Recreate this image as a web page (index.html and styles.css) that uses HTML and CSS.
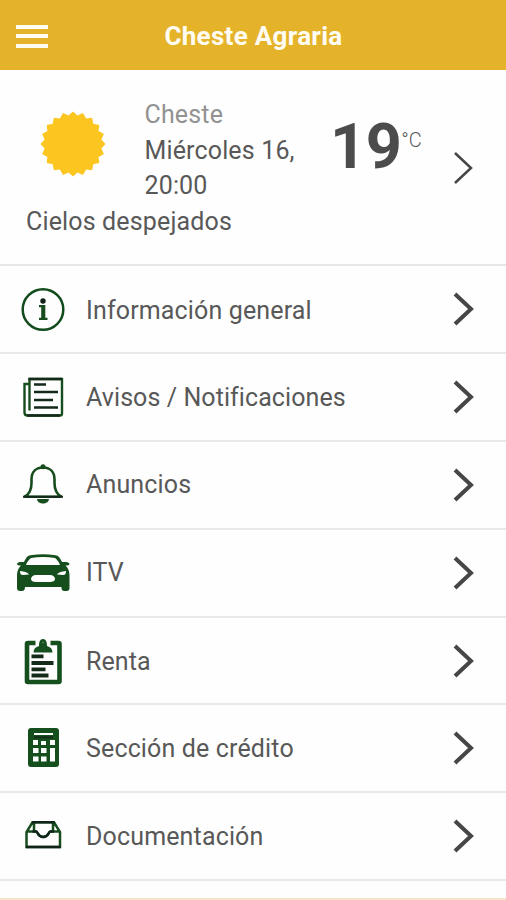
FILE: index.html
```html
<!DOCTYPE html>
<html lang="es">
<head>
<meta charset="utf-8">
<title>Cheste Agraria</title>
<link rel="stylesheet" href="styles.css">
</head>
<body>
<div class="app">
<header class="topbar">
  <div class="burger"><span></span><span></span><span></span></div>
  <h1>Cheste Agraria</h1>
</header>
<section class="weather">
  <div class="forecast">
    <div class="now">
      <svg class="sun" viewBox="-33 -33 66 66"><polygon fill="#fbc61f" points="0,-32.5 4.5,-28.4 10,-30.9 13.1,-25.6 19.1,-26.3 20.3,-20.3 26.3,-19.1 25.6,-13.1 30.9,-10 28.4,-4.5 32.5,0 28.4,4.5 30.9,10 25.6,13.1 26.3,19.1 20.3,20.3 19.1,26.3 13.1,25.6 10,30.9 4.5,28.4 0,32.5 -4.5,28.4 -10,30.9 -13.1,25.6 -19.1,26.3 -20.3,20.3 -26.3,19.1 -25.6,13.1 -30.9,10 -28.4,4.5 -32.5,0 -28.4,-4.5 -30.9,-10 -25.6,-13.1 -26.3,-19.1 -20.3,-20.3 -19.1,-26.3 -13.1,-25.6 -10,-30.9 -4.5,-28.4"/></svg>
      <div class="when"><p class="place">Cheste</p><p>Miércoles 16, 20:00</p></div>
    </div>
    <p class="sky">Cielos despejados</p>
  </div>
  <div class="temp"><strong>19</strong><span>°C</span></div>
  <svg class="arrow thin" viewBox="0 0 24 36"><path d="M3 3 19 18 3 33"/></svg>
</section>
<nav class="menu">
  <a class="row"><svg class="icon" viewBox="0 266 76 86"><circle cx="43" cy="309.500" r="20.300" fill="none" stroke="#124b1c" stroke-width="2.500"/><circle cx="43" cy="301" r="2.700" fill="#111f15"/><path fill="#174d1e" d="M39 305h6.300v12.800h2.200v2.200h-8.500v-2.200h2.200v-10.600h-2.200z"/></svg><span class="low">Información general</span><svg class="arrow" viewBox="0 0 24 36"><path d="M3 3 19 18 3 33"/></svg></a>
  <a class="row"><svg class="icon" viewBox="0 354 76 86"><g fill="none" stroke="#174d1e" stroke-width="2.400"><path d="M29.500 410.500V379H62v34.500q0 2-2 2H27.500q-3 0-3-3V384H29"/><path stroke="#13291a" d="M28.500 379H62M34 384.500h12M34 392h24M34 400h19M34 407.500h24M27 415.500h33"/></g></svg><span class="notices">Avisos / Notificaciones</span><svg class="arrow" viewBox="0 0 24 36"><path d="M3 3 19 18 3 33"/></svg></a>
  <a class="row"><svg class="icon" viewBox="0 442 76 86"><path d="M24.500 496.700C29 494.500 31.500 491 31.500 483v-3.500c0-8 5-12 11.500-12s11.500 4 11.500 12v3.500c0 8 2.500 11.500 7 13.700z" fill="none" stroke="#174d1e" stroke-width="2.600"/><circle cx="43" cy="466.800" r="2.500" fill="#174d1e"/><path d="M23 496.800h40" stroke="#13291a" stroke-width="2"/><path d="M37 499h12c-.5 6-11.500 6-12 0z" fill="#174d1e"/></svg><span>Anuncios</span><svg class="arrow" viewBox="0 0 24 36"><path d="M3 3 19 18 3 33"/></svg></a>
  <a class="row"><svg class="icon" viewBox="0 530 76 86"><path fill="#154f1e" fill-rule="evenodd" d="M24 562C27 556 28 555.500 32 555 39 553.900 47 553.900 54 555c4 .5 5 1 8 7 2 0 6-.5 7.500 1.500 0 2-2 2-4 2 3 3 4 6 4 10V588q0 3-3 3h-2q-3 0-3-3V587H25q0 4-3 4h-2q-3 0-3-3V575.500c0-4 1-7 4-10-2 0-4 0-4-2 1.500-2 5-1.500 7-1.500zM26 565h34c-1-3-3-5.500-5-7-8-1.500-16-1.500-24 0-2 1.500-4 4-5 7zM20 571c0 3 1 4 3 4l6-.5c-1-2-4-3-9-3.500zm46 0c-5 .5-8 1.500-9 3.500l6 .5c2 0 3-1 3-4zM31 579c0 2 2 3 5 3h14c3 0 5-1 5-3 0-2-2-4-5-4H36c-3 0-5 2-5 4z"/></svg><span>ITV</span><svg class="arrow" viewBox="0 0 24 36"><path d="M3 3 19 18 3 33"/></svg></a>
  <a class="row"><svg class="icon" viewBox="0 618 76 86"><path d="M35.500 643H28q-1 0-1 1V681q0 1 1 1H58.500q1 0 1-1V644q0-1-1-1H50.500" fill="none" stroke="#154f1e" stroke-width="4.600" stroke-linejoin="round"/><path fill="#154f1e" d="M33.500 652.500c0-3.500 2-5.500 5.500-6.500 0-4 1-7 4-7s4 3 4 7c3.500 1 5.500 3 5.500 6.500z"/><circle cx="43" cy="642.500" r=".8" fill="#6f9a74"/><path d="M31.500 656.300h12M31.500 663h22M31.500 669.300h14M31.500 675.500h17" stroke="#142b19" stroke-width="3.800"/></svg><span class="notices">Renta</span><svg class="arrow" viewBox="0 0 24 36"><path d="M3 3 19 18 3 33"/></svg></a>
  <a class="row"><svg class="icon" viewBox="0 706 76 86"><rect x="28" y="729" width="31" height="39" rx="3" fill="#154f1e"/><path fill="#fff" d="M34 734h19v2H34zM33 741h5v5h-5zM41 742h5v4h-5zM50 741h5v5h-5zM33 749h5.500v5H33zM41 749h5.500v5H41zM33 757.500h5.500v5H33zM41 757.500h5.500v5H41zM50 749h5v13.500h-5z"/><path stroke="#162d19" stroke-width="2" d="M34 738.300h19"/></svg><span>Sección de crédito</span><svg class="arrow" viewBox="0 0 24 36"><path d="M3 3 19 18 3 33"/></svg></a>
  <a class="row"><svg class="icon" viewBox="0 794 76 86"><g fill="none" stroke="#174d1e" stroke-width="2.500"><path d="M26.500 848V833L32.500 823.300H54L60 833V848zM27 832.500H36c2 0 1.500 5.500 7.200 5.500s5.200-5.500 7.200-5.500H60M34 824v8M53 824v8"/><path stroke="#10251a" d="M32 823.300h22.500M26 848h34.500M32.500 832.500H36c2 0 1.500 5.500 7.200 5.500s5.200-5.500 7.200-5.500H54"/></g></svg><span>Documentación</span><svg class="arrow" viewBox="0 0 24 36"><path d="M3 3 19 18 3 33"/></svg></a>
</nav>
<div class="next"></div>
</div>
</body>
</html>
```
FILE: styles.css
```css
* { box-sizing: border-box; }
body { margin: 0; background: #fefefe; color: #585858; font-family: Roboto, sans-serif; font-size: 25px; }
h1, p { margin: 0; }
svg { display: block; flex: none; }
.app { height: 900px; display: flex; flex-direction: column; overflow: hidden; }
.topbar { height: 70px; flex: none; display: grid; grid-template-columns: 48px 1fr 48px; align-items: center; background: #e4b32a; padding-top: 2px; }
.burger { display: grid; gap: 5.500px; padding-left: 16px; }
.burger span { height: 4px; width: 32px; background: #fffdf0; }
h1 { color: #fffdf3; font-size: 26px; font-weight: 700; text-align: center; padding-left: 1px; line-height: 68px; letter-spacing: .3px; }
.weather { height: 196px; flex: none; display: flex; border-bottom: 2px solid #e6e6e6; }
.forecast { width: 330px; padding: 27px 0 0 26px; line-height: 35.500px; letter-spacing: .15px; }
.now { display: flex; }
.sun { width: 66px; height: 66px; margin: 14px 38.500px 0 14px; }
.when { width: 160px; }
.place { color: #929292; }
.temp { width: 122px; display: flex; align-items: flex-start; padding-top: 38px; }
.temp strong { color: #4c4c4c; font-size: 63px; line-height: 78px; letter-spacing: -.5px; }
.temp span { font-size: 20px; font-weight: 300; line-height: 24px; padding-top: 20px; }
.arrow { width: 24px; height: 36px; fill: none; stroke: #464646; stroke-width: 4; margin-left: auto; margin-right: 30px; }
.thin { stroke-width: 2.500; margin: 80px 0 0 0; }
.row { height: 87.900px; display: flex; align-items: center; border-bottom: 2px solid #e8e8e8; letter-spacing: .15px; }
.low { padding-top: 3px; }
.notices { padding-top: 1px; letter-spacing: .08px; }
.icon { width: 76px; height: 86px; margin-right: 10px; }
.next { flex: 1; border-bottom: 2px solid #f6e3cb; }
```
